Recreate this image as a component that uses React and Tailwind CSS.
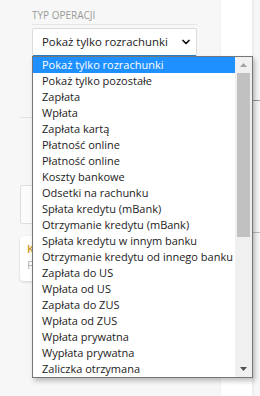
import React from 'react';
import { ChevronDown } from 'lucide-react';

const OPTIONS = [
  'Pokaż tylko rozrachunki',
  'Pokaż tylko pozostałe',
  'Zapłata',
  'Wpłata',
  'Zapłata kartą',
  'Płatność online',
  'Płatność online',
  'Koszty bankowe',
  'Odsetki na rachunku',
  'Spłata kredytu (mBank)',
  'Otrzymanie kredytu (mBank)',
  'Spłata kredytu w innym banku',
  'Otrzymanie kredytu od innego banku',
  'Zapłata do US',
  'Wpłata od US',
  'Zapłata do ZUS',
  'Wpłata od ZUS',
  'Wpłata prywatna',
  'Wypłata prywatna',
  'Zaliczka otrzymana',
];

function Arrow({ up, color }) {
  return (
    <svg width="7" height="4" viewBox="0 0 7 4">
      <path d={up ? 'M0 4 L3.5 0 L7 4 Z' : 'M0 0 L3.5 4 L7 0 Z'} fill={color} />
    </svg>
  );
}

export default function App() {
  return (
    <div className="relative w-[260px] h-[396px] overflow-hidden bg-[#f7f7f7] flex font-['Open_Sans',sans-serif]">
      {/* Filters column */}
      <div className="w-[221px] shrink-0 pl-[20px] pt-[8px]">
        <div className="pl-[12px] pr-[24px]">
          <div className="text-[10px] leading-[14px] text-[#9a9a9a] uppercase pb-[2px] border-b border-[#e6e6e6]">
            Typ operacji
          </div>
          <div className="mt-[3px] h-[28px] bg-white border border-[#dcdcdc] border-b-[#2a7fc0] rounded-[2px] flex items-center justify-between pl-[9px] pr-[4px]">
            <span className="text-[11.4px] text-[#222] whitespace-nowrap">Pokaż tylko rozrachunki</span>
            <ChevronDown size={12} strokeWidth={3.5} className="text-[#111]" />
          </div>
        </div>

        <div className="mt-[61px] border-t border-[#e2e2e2]" />

        <div className="mt-[67px] h-[39px] bg-[#fcfcfc] border border-[#dedede] rounded-[2px]" />

        <div className="mt-[12px] h-[45px] bg-white rounded-[4px] shadow-[0_1px_3px_rgba(0,0,0,0.15)] pl-[7px] pt-[5px]">
          <div className="text-[11px] leading-[16px] text-[#d09a1c] font-semibold">K</div>
          <div className="text-[11px] leading-[16px] text-[#b5b5b5]">F</div>
        </div>
      </div>

      {/* Side panel */}
      <div className="w-[31px] shrink-0 bg-white shadow-[1px_0_3px_rgba(0,0,0,0.08)]" />
      <div className="flex-1 flex flex-col">
        <div className="h-[101px] border-b border-[#9a9a9a]" />
        <div className="h-[132px] border-b border-[#bdbdbd]" />
      </div>

      {/* Open select list */}
      <div className="absolute left-[32px] top-[56px] w-[221px] h-[322px] bg-white border border-[#767676] shadow-[2px_3px_5px_rgba(0,0,0,0.25)] flex">
        <ul className="flex-1">
          {OPTIONS.map((opt, i) => (
            <li
              key={i}
              className={`h-[16px] leading-[16px] pl-[9px] text-[11px] whitespace-nowrap ${i === 0 ? 'bg-[#1e90ff] text-white' : 'text-[#1c1c1c]'}`}
            >
              {opt}
            </li>
          ))}
        </ul>
        <div className="w-[17px] bg-[#f0f0f0] flex flex-col items-center">
          <div className="h-[16px] flex items-center justify-center">
            <Arrow up color="#a3a3a3" />
          </div>
          <div className="w-[13px] h-[164px] bg-[#c1c1c1]" />
          <div className="flex-1" />
          <div className="h-[16px] flex items-center justify-center">
            <Arrow color="#505050" />
          </div>
        </div>
      </div>
    </div>
  );
}
